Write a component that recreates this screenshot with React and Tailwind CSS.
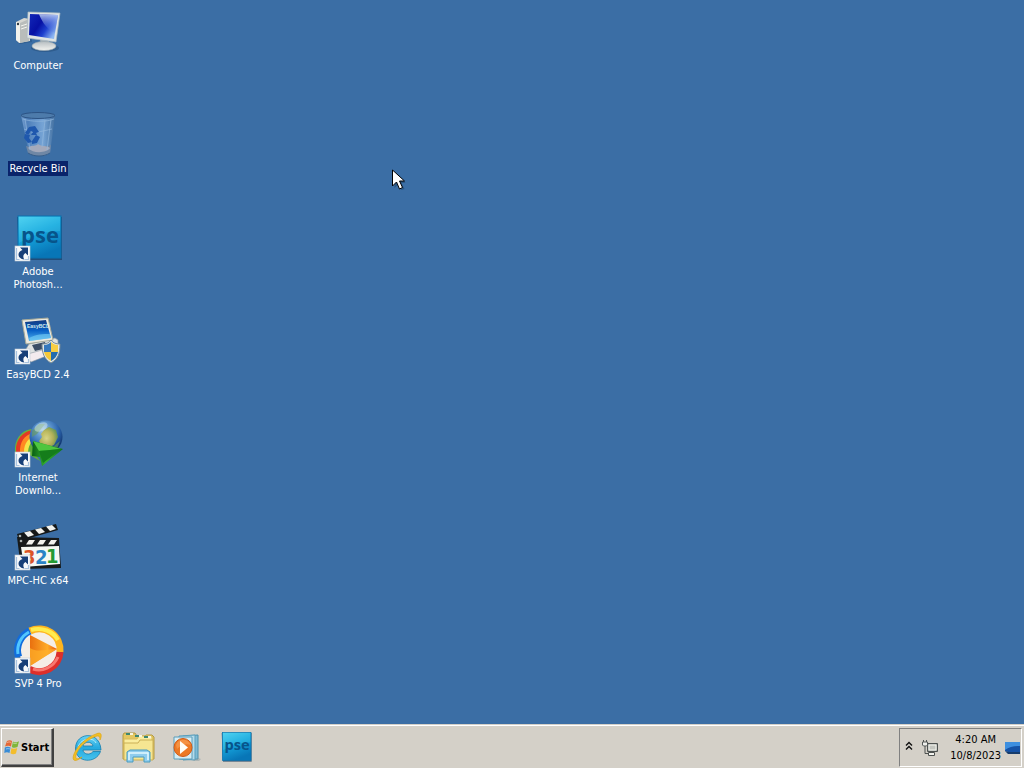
import React from "react";

const uiFont = "font-['DejaVu_Sans_Condensed','DejaVu_Sans',sans-serif]";

function Shortcut() {
  return (
    <g>
      <rect x="0" y="32" width="15" height="15" fill="#f7f9fb" stroke="#c2cbd5" strokeWidth=".6" />
      <path d="M1.500 34v11.500h3M13.500 42v3.500h-4" fill="none" stroke="#a9c3df" strokeWidth="1.200" />
      <path d="M5 33.500h8v8l-2.600-2.500c-2.400 1.600-2.600 3.600-1.200 6.500-3.200-.5-5.700-2.200-5.700-5 0-2.200 1.700-3.700 4-4.500z" fill="#173f78" />
    </g>
  );
}

function Icon({ children }) {
  return (
    <svg aria-hidden="true" viewBox="-1 0 48 48" className="size-12 shrink-0 overflow-visible">
      {children}
    </svg>
  );
}

function ComputerIcon() {
  return (
    <Icon>
      <defs>
        <linearGradient id="pcScreen" x1="0" y1="0" x2="1" y2=".6">
          <stop offset="0" stopColor="#1228b8" />
          <stop offset=".45" stopColor="#0610a4" />
          <stop offset=".7" stopColor="#1d3fce" />
          <stop offset="1" stopColor="#8db6f2" />
        </linearGradient>
        <linearGradient id="pcShine" x1="0" y1="0" x2="0" y2="1">
          <stop offset="0" stopColor="#d2e4fb" />
          <stop offset="1" stopColor="#3c63dc" stopOpacity=".1" />
        </linearGradient>
        <linearGradient id="pcBase" x1="0" y1="0" x2="0" y2="1">
          <stop offset="0" stopColor="#b7bec2" />
          <stop offset="1" stopColor="#f4f4f0" />
        </linearGradient>
      </defs>
      <path d="M2 34l10-6 5 1v5L5 36z" fill="#27527f" opacity=".5" />
      <path d="M1 14l8-4 6 1v22L4 35 1 32z" fill="#d6d7d2" />
      <path d="M1 14l4 1v20l-4-3z" fill="#f3f2ec" />
      <path d="M5 15l9-4v22l-9 2z" fill="#b9bdbb" />
      <path d="M6 18l6-2M6 21l6-2" stroke="#f3f3ed" />
      <circle cx="3" cy="16" r="1.200" fill="#303b43" />
      <ellipse cx="30" cy="40" rx="14" ry="4" fill="#244c78" opacity=".5" />
      <path d="M25 31l9 2 1 5h-9z" fill="#aab3b8" />
      <ellipse cx="29" cy="38" rx="12" ry="4.500" fill="url(#pcBase)" stroke="#9ba8ae" strokeWidth=".6" />
      <path d="M13 4l32 1-4 29-29-4z" fill="#dfe4e4" stroke="#a9b7c0" strokeWidth=".7" />
      <path d="M15 6l28 1-4 24-25-4z" fill="url(#pcScreen)" />
      <path d="M24 6.300L43 7l-3 18c-7-3-12-9-16-18.700z" fill="url(#pcShine)" opacity=".8" />
    </Icon>
  );
}

function BinIcon() {
  return (
    <Icon>
      <defs>
        <linearGradient id="binBody">
          <stop offset="0" stopColor="#78a0cf" />
          <stop offset=".2" stopColor="#4f80bb" />
          <stop offset=".65" stopColor="#76a4d5" />
          <stop offset="1" stopColor="#426f9f" />
        </linearGradient>
      </defs>
      <path d="M6 4l34 1-5 37c-5 4-15 4-21 0z" fill="url(#binBody)" />
      <path d="M11 35c5 2 19 2 25-1l-1 8c-6 4-16 4-22 0z" fill="#6f87a5" />
      <path d="M13 37c4-4 8-1 10-4 4 3 8 1 12 4-3 5-17 6-22 0z" fill="#a3a9bb" />
      <ellipse cx="23" cy="4.500" rx="17" ry="3" fill="#4d7bab" stroke="#2c5384" />
      <path d="M8 8c8 3 24 3 31 0M9 18l10 4 18-4M30 9l-3 27M36 8l-4 31M10 8l5 31" fill="none" stroke="#94b9dd" opacity=".65" />
      <g fill="#1f58ad">
        <path d="M14 16l6-1 4 6-3 1 1 2h-6l2-3-2-1-3 4-3-2z" />
        <path d="M10 23l5 1-1 3 3 4-4 1-4-5z" />
        <path d="M17 30l4-6 4 2-3 6-5 1z" />
      </g>
      <path d="M13 42c6 4 16 4 22 0" fill="none" stroke="#365d89" />
    </Icon>
  );
}

function PseArt({ id }) {
  return (
    <>
      <defs>
        <linearGradient id={id} x1="0" y1="0" x2=".4" y2="1">
          <stop offset="0" stopColor="#4ed2f2" />
          <stop offset=".48" stopColor="#16a6de" />
          <stop offset="1" stopColor="#0876b7" />
        </linearGradient>
      </defs>
      <path d="M2 3h45v43H4z" fill="#153a60" opacity=".65" />
      <rect x="3" y="2" width="43" height="42" fill={`url(#${id})`} stroke="#0871ad" />
      <path d="M4 3h41v14C31 17 17 21 4 29z" fill="#59d8f1" opacity=".25" />
      <text x="25" y="29" textAnchor="middle" fontFamily="Open Sans, sans-serif" fontWeight="700" fontSize="22" fill="#07548a">pse</text>
    </>
  );
}

function PseIcon() {
  return <Icon><PseArt id="pseDesk" /><Shortcut /></Icon>;
}

function EasyIcon() {
  return (
    <Icon>
      <defs>
        <linearGradient id="easyScreen" x1="0" y1="0" x2="0" y2="1">
          <stop offset="0" stopColor="#123a80" /><stop offset=".5" stopColor="#0860c6" /><stop offset="1" stopColor="#4fb2ee" />
        </linearGradient>
      </defs>
      <path d="M14 27l26-6 3 2v10l-28 9-7-5z" fill="#dfe2e2" stroke="#8c999f" strokeWidth=".7" />
      <path d="M9 38l18-5 7 5-18 7z" fill="#f3ebee" stroke="#8997a0" strokeWidth=".6" />
      <path d="M17 28l13-3 2 6-12 3z" fill="#3b4d65" />
      <path d="M7 3l26-2 5 22-27 4z" fill="#ebe9df" stroke="#a6a999" />
      <path d="M10 5l21-2 5 18-22 3z" fill="url(#easyScreen)" />
      <text x="12" y="11" fontFamily="Liberation Sans, sans-serif" fontWeight="700" fontSize="5" fill="#d4eced">EasyBCD</text>
      <path d="M14 21c7-4 14-4 21-4l1 4-21 3z" fill="#7ad2f6" opacity=".6" />
      <path d="M27 27c4 0 7-1 9-4 2 3 5 4 9 4 0 10-2 15-9 19-7-4-9-10-9-19z" fill="#e4e8e5" stroke="#758a96" />
      <path d="M29 28c3 0 5-1 7-3v10h-7z" fill="#3679bd" />
      <path d="M36 25c2 2 4 3 7 3v7h-7z" fill="#f8ce43" />
      <path d="M29 35h7v9c-4-2-6-5-7-9z" fill="#f4c839" />
      <path d="M36 35h7c-1 4-3 7-7 9z" fill="#246cae" />
      <Shortcut />
    </Icon>
  );
}

function IdmIcon() {
  return (
    <Icon>
      <defs>
        <radialGradient id="idmGlobe" cx=".42" cy=".3" r=".68">
          <stop offset="0" stopColor="#a9cbe6" /><stop offset=".35" stopColor="#5d95cd" /><stop offset=".7" stopColor="#2a62ab" /><stop offset="1" stopColor="#10346c" />
        </radialGradient>
        <radialGradient id="idmLand" cx=".4" cy=".55" r=".6">
          <stop offset="0" stopColor="#eee07a" /><stop offset=".6" stopColor="#c2b845" /><stop offset="1" stopColor="#6c9a45" />
        </radialGradient>
        <linearGradient id="idmArrow"><stop offset="0" stopColor="#085e13" /><stop offset=".45" stopColor="#35b32d" /><stop offset="1" stopColor="#0b7119" /></linearGradient>
      </defs>
      <path d="M21 9C10 8 1 15 0 28v8l9 8c0-13 4-20 15-25z" fill="#6ab53c" />
      <path d="M21 10C10 10 3 16 1 27v7l9 5c0-11 4-17 13-21z" fill="#e23a24" />
      <path d="M21 13C12 13 6 19 5 29v6l7 3c0-10 4-15 11-19z" fill="#ff8b22" />
      <path d="M21 15c-7 2-12 8-12 17l5 4c0-9 3-13 9-17z" fill="#f5e64a" />
      <path d="M21 19c-5 2-8 7-8 15l14 8c-6-4-8-10-5-19z" fill="#5fae38" />
      <circle cx="31" cy="17" r="16.500" fill="url(#idmGlobe)" />
      <path d="M29 10l5-3 7 3 2 7-4 8-7 3-5-1-3-6 3-4-1-3z" fill="url(#idmLand)" opacity=".85" />
      <path d="M17 11l7-7 6 0-4 5-4 5-5 3zM39 26l6-5-3 8-5 2z" fill="#6b9b58" opacity=".6" />
      <ellipse cx="26" cy="7" rx="7" ry="4" transform="rotate(-25 26 7)" fill="#e1f1ed" opacity=".45" />
      <path d="M18 21l30 8-21 17-2-9-8-1z" fill="url(#idmArrow)" />
      <path d="M18 21l28 8-22 2z" fill="#4fc63f" /><path d="M24 31l22-2-18 14z" fill="#157d1b" />
      <Shortcut />
    </Icon>
  );
}

function MpcIcon() {
  return (
    <Icon>
      <path d="M2 11L41 1l2 6L4 18z" fill="#151818" />
      <path d="M2 14l42 1 2 30-40 1z" fill="#171a1a" />
      <path d="M9 9.500l6-1.500 4 4-6 2zM20 6.500l6-1.500 4 4-6 2zM31 3.500l6-1.500 4 4-6 2zM14 17h6l-3 4.500h-6zM25 17h6l-3 4.500h-6zM36 17h6l-3 4.500h-6z" fill="#f2f2ed" />
      <path d="M6 24l38-1 1 18-36 3z" fill="#f5f8f2" />
      <circle cx="5" cy="13" r="1.300" fill="#aab2b0" />
      <circle cx="6" cy="18" r="1.300" fill="#aab2b0" />
      <g fontFamily="DejaVu Sans Condensed, DejaVu Sans, sans-serif" fontWeight="700" fontSize="20">
        <text x="8" y="41" fill="#dc5424">3</text><text x="20" y="41" fill="#2a83c6">2</text><text x="31" y="40" fill="#249a33">1</text>
      </g>
      <Shortcut />
    </Icon>
  );
}

function SvpIcon() {
  return (
    <Icon>
      <defs>
        <linearGradient id="svpPlay" x1="0" x2="1"><stop offset="0" stopColor="#e9700f" /><stop offset=".65" stopColor="#ffab27" /><stop offset="1" stopColor="#e9520a" /></linearGradient>
      </defs>
      <circle cx="24" cy="24" r="20" fill="#f5eee6" />
      <g fill="none" strokeWidth="7">
        <path d="M3.700 31A21 21 0 0 1 15 5" stroke="#116ddd" />
        <path d="M15 5A21 21 0 0 1 45 26" stroke="#ffb51e" />
        <path d="M45 26A21 21 0 0 1 14 43" stroke="#dd2f2b" />
        <path d="M18 43c9 3 20-1 25-12" stroke="#f87870" strokeWidth="3" />
      </g>
      <path d="M3 28A21 21 0 0 1 14 6" fill="none" stroke="#51c6ff" strokeWidth="3" />
      <path d="M16 4C27 1 38 5 43 14" fill="none" stroke="#ffed4e" strokeWidth="4" />
      <path d="M15 9l27 14-27 17z" fill="url(#svpPlay)" />
      <path d="M15 22c8 5 16 1 27 1L15 40z" fill="#ffb12a" opacity=".7" />
      <Shortcut />
    </Icon>
  );
}

const shortcuts = [
  { lines: ["Computer"], icon: ComputerIcon },
  { lines: ["Recycle Bin"], icon: BinIcon, selected: true },
  { lines: ["Adobe", "Photosh..."], icon: PseIcon },
  { lines: ["EasyBCD 2.4"], icon: EasyIcon },
  { lines: ["Internet", "Downlo..."], icon: IdmIcon },
  { lines: ["MPC-HC x64"], icon: MpcIcon },
  { lines: ["SVP 4 Pro"], icon: SvpIcon },
];

function DesktopItem({ item }) {
  const Picture = item.icon;
  return (
    <li className="h-[83px]">
      <button type="button" className="flex w-full flex-col items-center gap-0.5 whitespace-nowrap text-white">
        <Picture />
        <span className={item.selected ? "bg-[#0a246a] p-px" : "p-px"}>
          {item.lines.map((line) => <span key={line} className="block">{line}</span>)}
        </span>
      </button>
    </li>
  );
}

function WindowsFlag() {
  return (
    <svg aria-hidden="true" viewBox="0 0 16 16" className="size-4 shrink-0">
      <path d="M3 2c2-1.300 4-1 5 0L7 7.500c-2-1.200-4-1-6 0z" fill="#e46734" />
      <path d="M9 2.500c2 1.300 4 1 6-.2L13.500 8c-2 1-4 1.200-5.700 0z" fill="#80b63a" />
      <path d="M.8 8.500c2-1.200 4-1 5.700.1L5.500 14c-2-1.200-3.500-1-5.200 0z" fill="#398cd6" />
      <path d="M7.500 9c2 1.200 4 1 5.700 0L12 14.500c-2 1-4 .9-5.500-.2z" fill="#f3bd2c" />
      <path d="M3 3.500c2-.8 3-.6 4 0M9 4c2 .8 3 .6 4 0M2 10c1.500-.6 3-.4 4 0" fill="none" stroke="#fff" opacity=".45" />
    </svg>
  );
}

function IeIcon() {
  return (
    <svg aria-hidden="true" viewBox="0 0 32 32" className="size-8">
      <defs><linearGradient id="ieBlue" x1="0" y1="0" x2="0" y2="1"><stop stopColor="#6bd4f5" /><stop offset=".5" stopColor="#25a9df" /><stop offset="1" stopColor="#48c3ed" /></linearGradient></defs>
      <path d="M30 19H12c.2 4 6.500 6 10 1.500h7.500C25 33 5 32 4.500 18 4 1 29-1 30 19zm-8-4c-1-5-9-5-10 0z" fill="url(#ieBlue)" stroke="#137daf" strokeWidth=".8" fillRule="evenodd" />
      <path d="M7 17C8 8 22 5 25 12" fill="none" stroke="#b4edfb" />
      <path d="M25 3c6-3 6 2 4 6 0-5-2-5-8-2C13 11 7 18 5 24c-1 4 1 5 6 2-6 5-11 5-8-3C6 15 16 6 25 3z" fill="#f2bf24" stroke="#dca315" strokeWidth=".7" />
    </svg>
  );
}

function FolderIcon() {
  return (
    <svg aria-hidden="true" viewBox="0 0 34 32" className="h-8 w-[34px]">
      <path d="M2 4l1-2h11l2 3h8l1-1h6l2 2v22H2z" fill="#e4c760" stroke="#b49a43" />
      <path d="M3 8h13l2-3h13v22H3z" fill="#faed9e" stroke="#d6ba5d" />
      <path d="M3 12h14l2-3h13v20H3z" fill="#f6e692" stroke="#caaf56" />
      <path d="M5 3h4M14 5h4M23 6h4" stroke="#3e8771" strokeWidth="2" />
      <path d="M9 3h3M18 5h3M27 6h3" stroke="#f8f5df" strokeWidth="2" />
      <path d="M6 31V21l3-2h17l3 2v10h-6v-5H12v5z" fill="#8fcdee" stroke="#499bbf" />
      <path d="M8 29v-7h19v7" fill="none" stroke="#e3f9ff" strokeWidth="1.500" />
    </svg>
  );
}

function MediaIcon() {
  return (
    <svg aria-hidden="true" viewBox="0 0 32 32" className="size-8">
      <path d="M12 5l15-1v24l-15 1z" fill="#80bbd4" stroke="#4b91af" />
      <path d="M8 5l16-1v25L8 28z" fill="#b5dbea" stroke="#5a9fbd" />
      <path d="M3 6h18v22H3z" fill="#d5edf4" stroke="#5d9dba" />
      <path d="M27 27l3 1-2 2h-7z" fill="#879da3" opacity=".5" />
      <circle cx="12" cy="16.500" r="9" fill="#ed7924" stroke="#d05a16" />
      <path d="M5 14c2-7 12-7 15 0-4-2-10 0-14 4z" fill="#ffb16b" opacity=".45" />
      <path d="M9 10l8 6.500L9 23z" fill="#fffef8" />
    </svg>
  );
}

function NetworkIcon() {
  return (
    <svg aria-hidden="true" viewBox="0 0 18 18" className="size-[18px]">
      <path d="M6.500 4.500h10v8h-10z" fill="#a9adab" stroke="#4e5250" />
      <path d="M8 6h7v5H8z" fill="#c4c6c0" stroke="#f5f5ed" />
      <path d="M7.500 13.500h6v3h-6z" fill="#f3f3ee" stroke="#4e5250" />
      <path d="M2.500 1v2M5.500 1v2M4 7v7.500h3" fill="none" stroke="#4e5250" />
      <path d="M1.500 3h5v3l-1 1h-3l-1-1z" fill="#eeeeea" stroke="#545856" />
    </svg>
  );
}

function Taskbar() {
  return (
    <footer className="flex h-11 shrink-0 items-stretch border-t border-[#d4d0c8] bg-[#d4d0c8] text-black shadow-[inset_0_1px_0_#ffffff]">
      <button type="button" className="mt-[3px] mb-px ml-px flex w-[53px] items-center gap-px border-t border-r-2 border-b-2 border-l border-t-white border-r-[#404040] border-b-[#404040] border-l-white pl-0.5 text-[11px] font-bold shadow-[inset_-1px_-1px_0_#808080]">
        <WindowsFlag />Start
      </button>
      <nav aria-label="Quick launch" className="ml-[17px] flex items-center gap-4">
        <button type="button" aria-label="Internet Explorer" className="w-[34px]"><IeIcon /></button>
        <button type="button" aria-label="Windows Explorer"><FolderIcon /></button>
        <button type="button" aria-label="Media Player" className="w-[34px]"><MediaIcon /></button>
        <button type="button" aria-label="Photoshop Elements">
          <svg aria-hidden="true" viewBox="1 0 48 48" className="size-8"><PseArt id="pseBar" /></svg>
        </button>
      </nav>
      <section aria-label="Notification area" className="mt-[3px] mr-0.5 mb-px ml-auto flex items-center border border-t-[#808080] border-r-white border-b-white border-l-[#808080] pr-px pl-[5px] text-[11px]">
        <button type="button" aria-label="Show hidden icons" className="pb-1">
          <svg aria-hidden="true" viewBox="0 0 8 10" className="h-[10px] w-2">
            <path d="M1 4.500l3-3 3 3M1 8.500l3-3 3 3" fill="none" stroke="#111" strokeWidth="1.400" />
          </svg>
        </button>
        <button type="button" aria-label="Network" className="ml-2"><NetworkIcon /></button>
        <time dateTime="2023-10-08T04:20" className="ml-[11px] text-center leading-4">
          <span className="block">4:20 AM</span><span className="block">10/8/2023</span>
        </time>
        <button type="button" aria-label="Show desktop" className="ml-[3px]">
          <svg aria-hidden="true" viewBox="0 0 16 14" className="h-[14px] w-4">
            <path d="M1 1h15v11L4 11 1 10z" fill="#1552a6" />
            <path d="M1 1h15v4C10 5 5 6 1 9z" fill="#3d8fe0" /><path d="M1 10l4 1h11v2H4z" fill="#163c6c" />
          </svg>
        </button>
      </section>
    </footer>
  );
}

export default function App() {
  return (
    <div className={`${uiFont} relative flex min-h-screen flex-col bg-[#3b6ea5] text-[11px] leading-[13px]`}>
      <main className="flex-1 pt-2">
        <ul className="flex w-[76px] flex-col gap-5">
          {shortcuts.map((item) => <DesktopItem key={item.lines[0]} item={item} />)}
        </ul>
      </main>
      <Taskbar />
      <svg aria-hidden="true" viewBox="0 0 14 22" className="pointer-events-none absolute top-[169px] left-[392px] h-[22px] w-[14px]">
        <path d="M2.500 3v16l4-4 3 6 3-1-3-6h4z" fill="#173b61" opacity=".5" />
        <path d="M.5 1v16l4-4 3 7 3-1.500-3-6.500h5z" fill="#fff" stroke="#000" />
      </svg>
    </div>
  );
}
